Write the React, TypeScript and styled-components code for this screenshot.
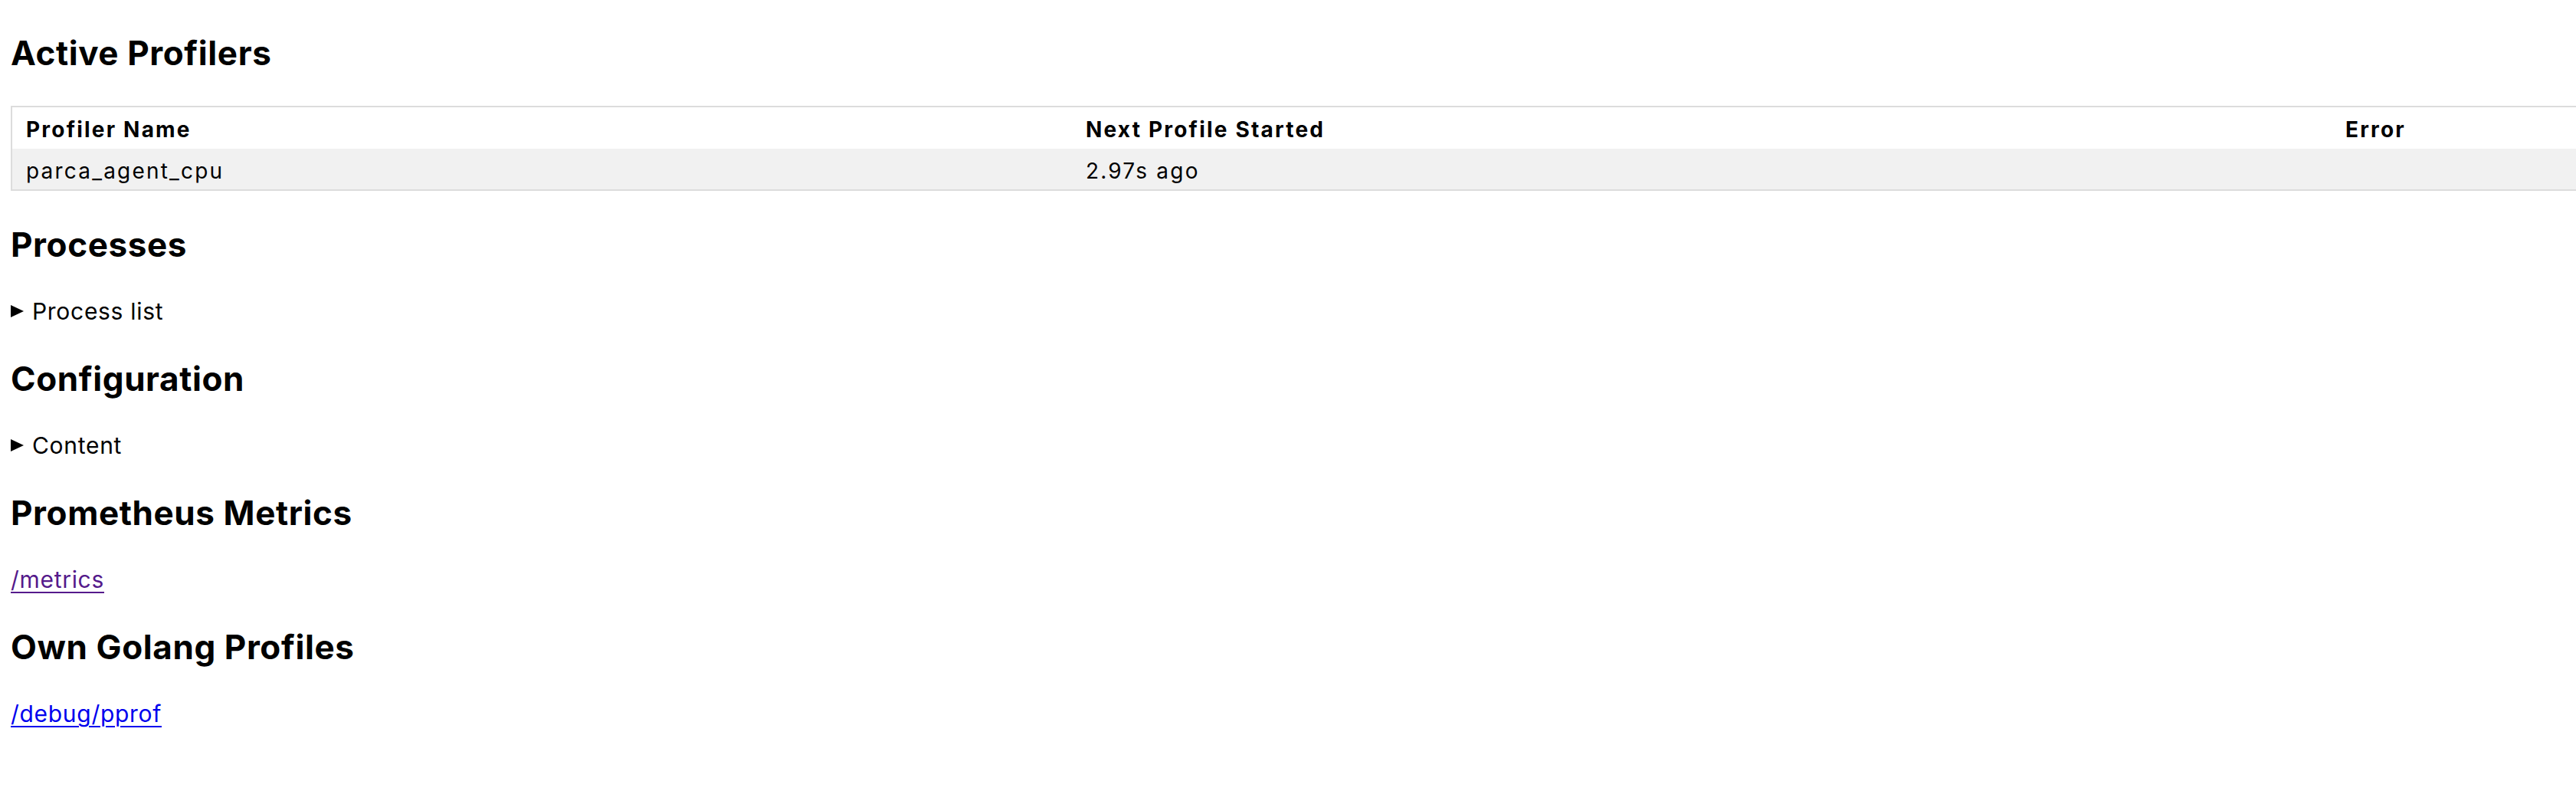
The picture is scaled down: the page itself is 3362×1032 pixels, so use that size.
import React from "react";
import styled, { createGlobalStyle } from "styled-components";

// Agent status page: profilers table + a few collapsible/link sections

const GlobalStyle = createGlobalStyle`
  html, body {
    margin: 0;
    padding: 0;
    background: #fff;
    overflow-x: hidden;
  }
  body {
    font-family: Inter, "Noto Sans", sans-serif;
    color: #000;
  }
`;

const Page = styled.main`
  display: flow-root;
  padding: 0 14px;
`;

const Heading = styled.h2`
  font-size: 44px;
  line-height: 53px;
  font-weight: 700;
  letter-spacing: 0.6px;
  margin: 44px 0 42px;

  &:first-child {
    margin-top: 43px;
  }
`;

const Table = styled.table`
  width: 3600px;
  table-layout: fixed;
  border-collapse: collapse;
  border: 2px solid #dcdcdc;
  font-size: 28px;
  line-height: 34px;
  letter-spacing: 2.2px;
`;

const HeadCell = styled.th`
  text-align: left;
  font-weight: 700;
  padding: 12px 18px 8px;
  background: #fff;
`;

const Row = styled.tr<{ $striped?: boolean }>`
  background: ${(p) => (p.$striped ? "#f1f1f1" : "#fff")};
`;

const Cell = styled.td`
  padding: 12px 18px 7px;
`;

const Details = styled.details`
  font-size: 30px;
  line-height: 36px;
  letter-spacing: 0.7px;
`;

const Summary = styled.summary`
  display: flex;
  align-items: center;
  gap: 11px;
  list-style: none;
  cursor: pointer;

  &::-webkit-details-marker {
    display: none;
  }

  &::before {
    content: "";
    width: 0;
    height: 0;
    border-left: 17px solid #000;
    border-top: 8px solid transparent;
    border-bottom: 8px solid transparent;
  }
`;

const LinkLine = styled.p`
  margin: 0;
  font-size: 30px;
  line-height: 36px;
  letter-spacing: 0.7px;
`;

const Link = styled.a<{ $visited?: boolean }>`
  color: ${(p) => (p.$visited ? "#551a8b" : "#0000ee")};
  text-decoration: underline;
  text-decoration-thickness: 2px;
  text-underline-offset: 5px;
`;

const profilers = [
  { name: "parca_agent_cpu", started: "2.97s ago", error: "" },
];

export default function App() {
  return (
    <>
      <GlobalStyle />
      <Page>
        <Heading>Active Profilers</Heading>
        <Table>
          <colgroup>
            <col style={{ width: 1384 }} />
            <col style={{ width: 1644 }} />
            <col />
          </colgroup>
          <thead>
            <tr>
              <HeadCell>Profiler Name</HeadCell>
              <HeadCell>Next Profile Started</HeadCell>
              <HeadCell>Error</HeadCell>
            </tr>
          </thead>
          <tbody>
            {profilers.map((p, i) => (
              <Row key={p.name} $striped={i % 2 === 0}>
                <Cell>{p.name}</Cell>
                <Cell>{p.started}</Cell>
                <Cell>{p.error}</Cell>
              </Row>
            ))}
          </tbody>
        </Table>

        <Heading>Processes</Heading>
        <Details>
          <Summary>Process list</Summary>
        </Details>

        <Heading>Configuration</Heading>
        <Details>
          <Summary>Content</Summary>
        </Details>

        <Heading>Prometheus Metrics</Heading>
        <LinkLine>
          <Link href="/metrics" $visited>
            /metrics
          </Link>
        </LinkLine>

        <Heading>Own Golang Profiles</Heading>
        <LinkLine>
          <Link href="/debug/pprof">/debug/pprof</Link>
        </LinkLine>
      </Page>
    </>
  );
}
